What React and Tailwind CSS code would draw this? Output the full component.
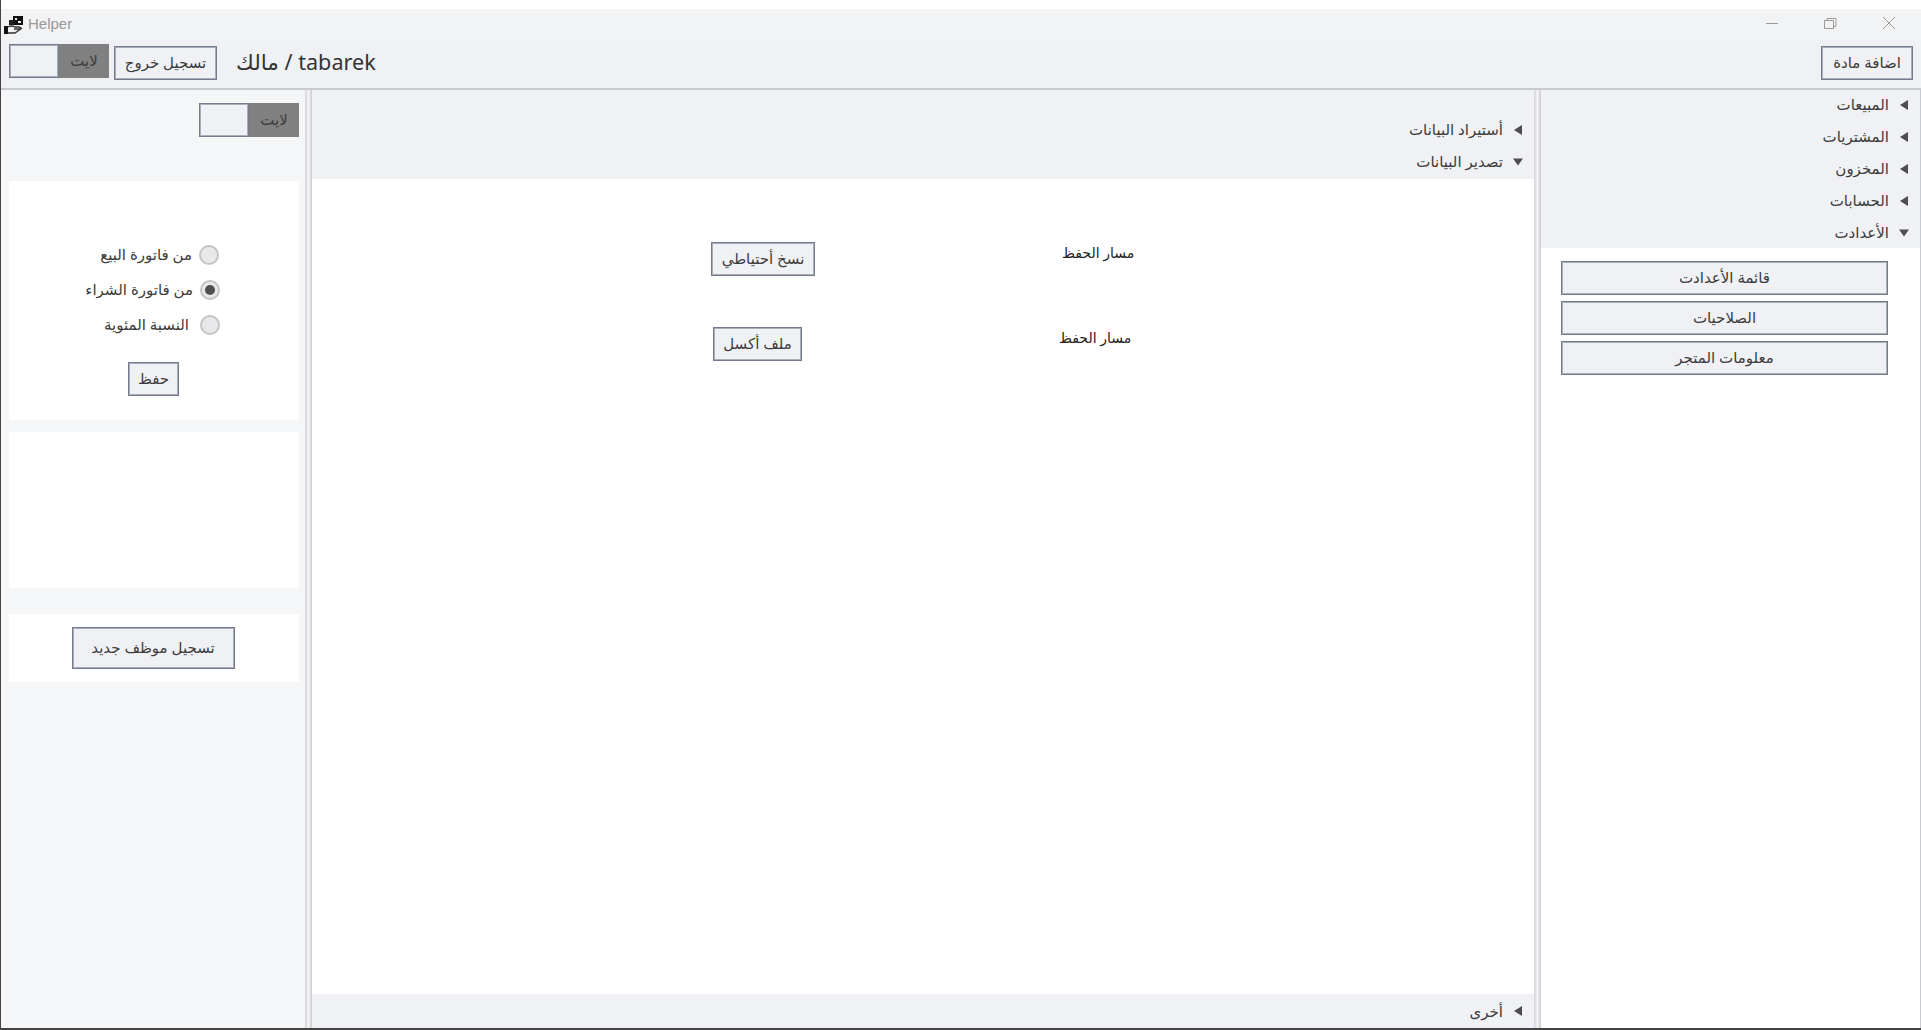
import React from 'react';

const FONT = 'font-["Noto_Sans","DejaVu_Sans",sans-serif]';
const BORDER = 'border border-[#747b8c] shadow-[inset_0_0_0_1px_#a9aeba]';

const Arrow = ({ open }) => (
  <svg width="10" height="10" viewBox="0 0 10 10" className="shrink-0">
    {open ? <path d="M0 1.5h10L5 8.5z" fill="#4d4d4d" /> : <path d="M9 0v10L1 5z" fill="#4d4d4d" />}
  </svg>
);

const Btn = ({ children, className = '' }) => (
  <button className={`flex items-center justify-center bg-[#f0f1f5] pb-[2px] text-[15px] text-[#3c3c3c] ${BORDER} ${className}`}>
    {children}
  </button>
);

const Toggle = ({ fill }) => (
  <div className="flex h-[34px] w-[100px] bg-[#808080]">
    <div className={`h-full w-[50px] ${BORDER} ${fill}`} />
    <div className="flex flex-1 items-center justify-center pb-[2px] text-[15px] text-[#3c3c3c]">لايت</div>
  </div>
);

const Row = ({ label, open, className = 'h-8 pb-[3px] pr-[11px]' }) => (
  <div className={`flex items-center justify-end gap-[10px] text-[15px] text-[#3c3c3c] ${className}`}>
    <span>{label}</span>
    <Arrow open={open} />
  </div>
);

const Radio = ({ label, checked, className }) => (
  <div className={`flex items-center justify-end text-[15px] text-[#3c3c3c] ${className}`}>
    <span className="pb-[2px]">{label}</span>
    <div className="flex h-5 w-5 items-center justify-center rounded-full border-2 border-[#c4c4c4] bg-[#e8e8ea]">
      {checked && <div className="h-[10px] w-[10px] rounded-full bg-[#4f4f4f]" />}
    </div>
  </div>
);

const Sash = () => (
  <div className="w-[7px] shrink-0 bg-gradient-to-r from-[#d2d3d8] via-[#f5f5f7] to-[#c9cad0]" />
);

const Logo = () => (
  <svg width="20" height="20" viewBox="0 0 20 20">
    <rect x="10" y="1" width="10" height="9" fill="#111" />
    <rect x="12" y="3" width="2" height="2" fill="#eee" />
    <rect x="15" y="6" width="3" height="2" fill="#eee" />
    <rect x="1" y="11" width="4" height="8" fill="#111" />
    <path d="M5 12c3-2 5-1 7 0h4c2 0 2 2 0 2h-5M5 18h7l7-5" fill="none" stroke="#333" strokeWidth="1.3" />
    <rect x="6" y="5" width="4" height="5" fill="#222" />
  </svg>
);

export default function App() {
  return (
    <div className={`flex h-[1030px] w-[1921px] flex-col overflow-hidden border-l border-l-[#444] bg-white ${FONT}`}>
      <div className="h-[9px] shrink-0 bg-white" />

      {/* Title bar */}
      <div className="flex h-[31px] shrink-0 items-center bg-[#f2f3f5] pl-[2px]">
        <Logo />
        <span className="ml-[5px] flex-1 font-['Liberation_Sans',sans-serif] text-[15px] text-[#999]">Helper</span>
        <svg width="130" height="14" viewBox="0 0 130 14" className="mb-[3px] mr-[25px]" fill="none" stroke="#9a9a9a">
          <path d="M0 7.5h12" />
          <path d="M58.5 4.5h9v8h-9zM61 4.5v-2h9v8h-2.5" />
          <path d="M117 1l12 12M129 1l-12 12" />
        </svg>
      </div>

      {/* Header */}
      <div className="flex h-[50px] shrink-0 items-start border-b-2 border-b-[#c9cad0] bg-[#f0f1f5] pl-2 pr-[8px]">
        <div className="mt-[4px]"><Toggle fill="bg-[#f0f1f5]" /></div>
        <Btn className="ml-[5px] mt-[6px] h-[34px] w-[103px]">تسجيل خروج</Btn>
        <div className="ml-[19px] mt-2 flex-1 text-[21.6px] leading-7 text-[#333]">مالك / tabarek</div>
        <Btn className="mt-[6px] h-[34px] w-[92px]">اضافة مادة</Btn>
      </div>

      <div className="flex min-h-0 flex-1 border-b-2 border-b-[#444]">
        {/* Left panel */}
        <div className="flex w-[304px] shrink-0 flex-col bg-[#f5f6f8] pl-2 pr-[6px]">
          <div className="mt-[13px] flex justify-end"><Toggle fill="bg-[#f0f1f5]" /></div>
          <div className="mt-[44px] h-[239px] bg-white pt-[63px]">
            <Radio label="من فاتورة البيع" className="h-[22px] gap-[7px] pr-[80px]" />
            <Radio label="من فاتورة الشراء" checked className="mt-[13px] h-[22px] gap-[7px] pr-[79px]" />
            <Radio label="النسبة المئوية" className="mt-[13px] h-[22px] gap-[11px] pr-[79px]" />
            <Btn className="ml-[119px] mt-[26px] h-[34px] w-[51px]">حفظ</Btn>
          </div>
          <div className="mt-3 h-[156px] bg-white" />
          <div className="mt-[26px] flex h-[68px] items-center justify-center bg-white pr-[2px]">
            <Btn className="h-[42px] w-[163px]">تسجيل موظف جديد</Btn>
          </div>
        </div>
        <Sash />

        {/* Center panel */}
        <div className="flex min-w-0 flex-1 flex-col">
          <div className="flex h-[89px] shrink-0 flex-col justify-end bg-[#f0f1f5]">
            <Row label="أستيراد البيانات" />
            <Row label="تصدير البيانات" open />
          </div>
          <div className="min-h-0 flex-1 bg-white pt-[63px]">
            <div className="ml-[399px] flex items-start">
              <Btn className="h-[34px] w-[104px]">نسخ أحتياطي</Btn>
              <span className="ml-[247px] mt-[1px] text-[14px] leading-5 text-[#222]">مسار الحفظ</span>
            </div>
            <div className="ml-[401px] mt-[51px] flex items-start">
              <Btn className="h-[34px] w-[89px]">ملف أكسل</Btn>
              <span className="ml-[257px] mt-[1px] text-[14px] leading-5 text-[#222]">مسار الحفظ</span>
            </div>
          </div>
          <Row label="أخرى" className="h-[34px] shrink-0 bg-[#f0f1f5] pr-[11px]" />
        </div>
        <Sash />

        {/* Right panel */}
        <div className="flex w-[380px] shrink-0 flex-col border-r border-r-[#c9cad0] bg-white">
          <div className="h-[158px] shrink-0 bg-[#f0f1f5]">
            <Row label="المبيعات" />
            <Row label="المشتريات" />
            <Row label="المخزون" />
            <Row label="الحسابات" />
            <Row label="الأعدادت" open />
          </div>
          <div className="flex flex-col gap-[6px] pl-5 pr-[32px] pt-[13px]">
            <Btn className="h-[34px] w-full">قائمة الأعدادت</Btn>
            <Btn className="h-[34px] w-full">الصلاحيات</Btn>
            <Btn className="h-[34px] w-full">معلومات المتجر</Btn>
          </div>
        </div>
      </div>
    </div>
  );
}
